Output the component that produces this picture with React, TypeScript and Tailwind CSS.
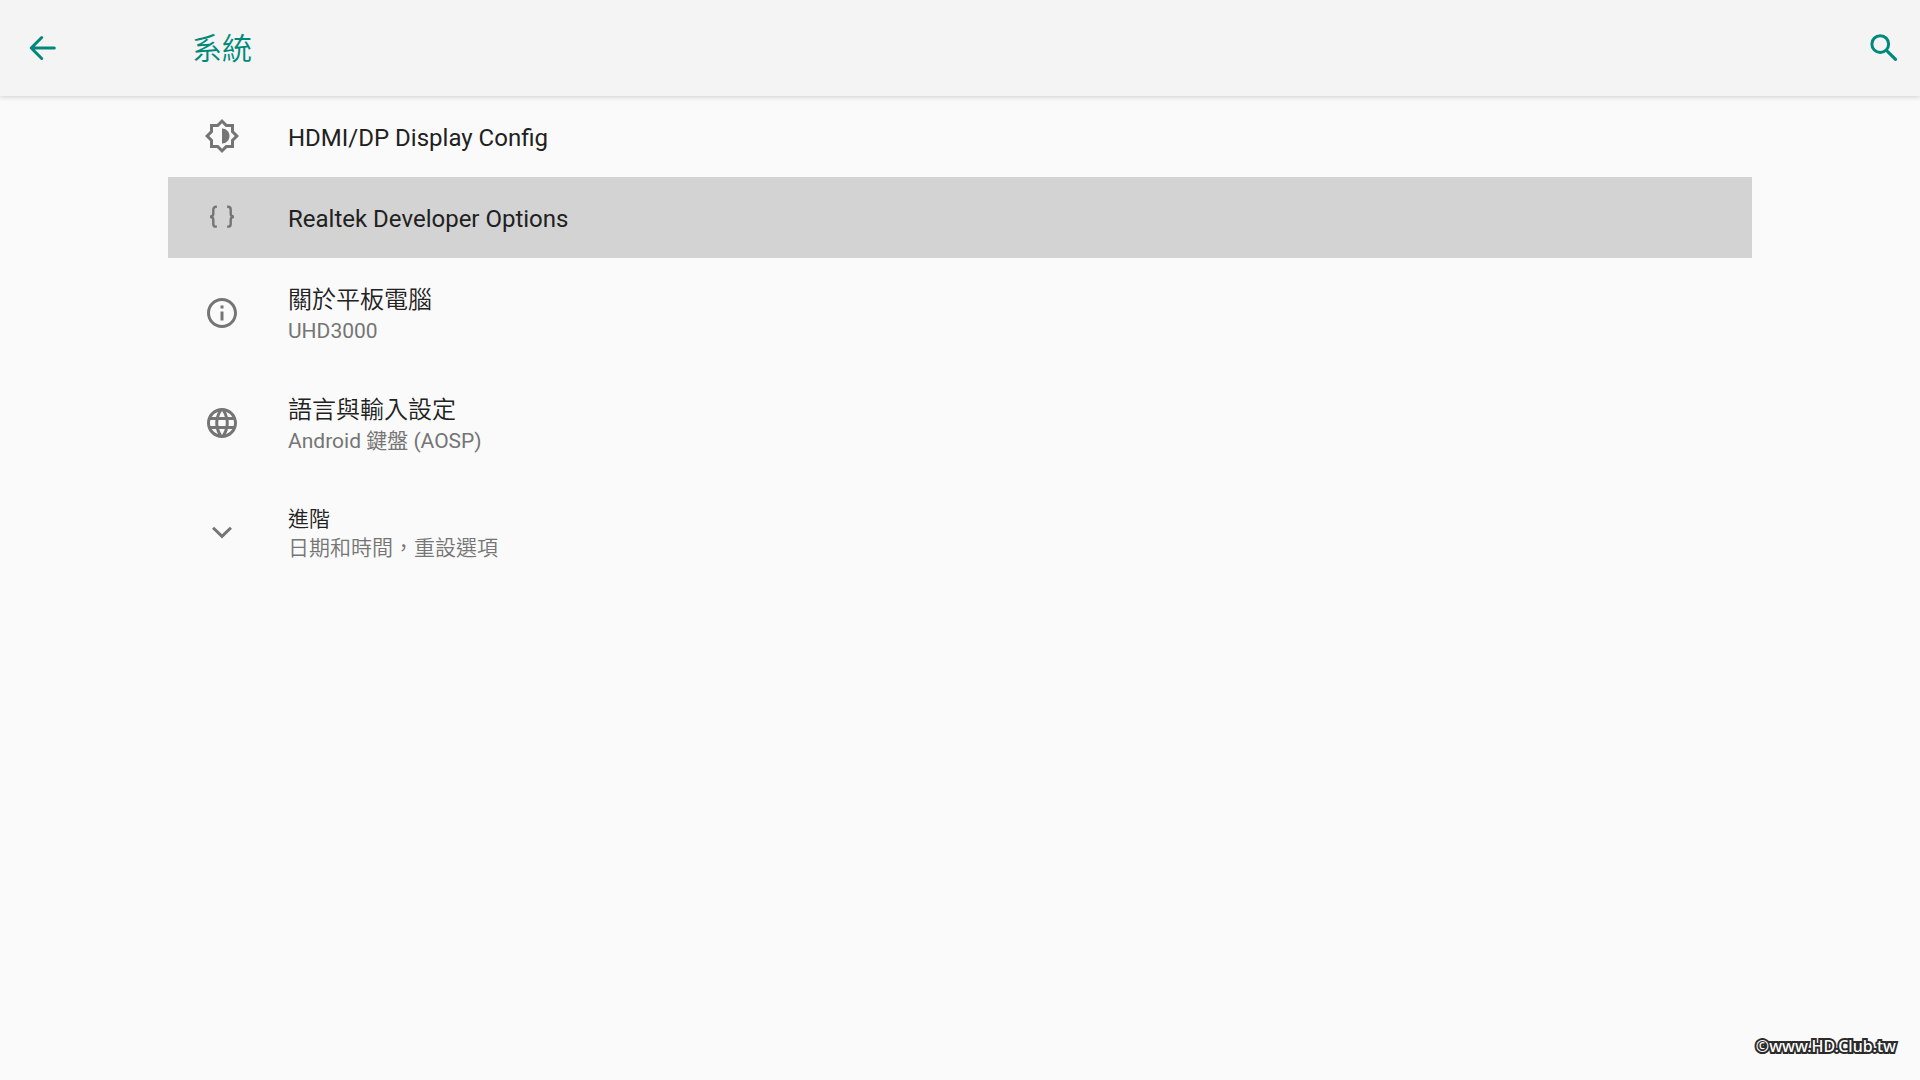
import type { ReactNode } from 'react';

interface SettingsItem {
  id: string;
  title: string;
  summary?: string;
  icon: ReactNode;
  selected?: boolean;
  compact?: boolean;
}

function ArrowBackIcon() {
  return (
    <svg viewBox="0 0 24 24" className="size-9" fill="none" stroke="currentColor" strokeWidth="2" strokeLinecap="round" aria-hidden="true">
      <path d="M20.2 12H5M11.8 5l-7 7 7 7" strokeLinejoin="round" />
    </svg>
  );
}

function SearchIcon() {
  return (
    <svg viewBox="0 0 24 24" className="size-9" fill="none" stroke="currentColor" aria-hidden="true">
      <circle cx="9.5" cy="9.4" r="5.6" strokeWidth="2" />
      <path d="M14.3 14.2l5.4 5.4" strokeWidth="2.1" strokeLinecap="round" />
    </svg>
  );
}

function DisplayIcon() {
  return (
    <svg viewBox="0 0 24 24" className="size-9" fill="currentColor" aria-hidden="true">
      <path
        fillRule="evenodd"
        d="M20 8.69V4h-4.69L12 .69 8.69 4H4v4.69L.69 12 4 15.31V20h4.69L12 23.31 15.31 20H20v-4.69L23.31 12 20 8.69zm-2 5.79V18h-3.52L12 20.48 9.52 18H6v-3.52L3.52 12 6 9.52V6h3.52L12 3.52 14.48 6H18v3.52L20.48 12 18 14.48z"
      />
      <path d="M12 7v10c2.76 0 5-2.24 5-5s-2.24-5-5-5z" />
    </svg>
  );
}

function BracesIcon() {
  return (
    <svg viewBox="0 0 24 24" className="size-9" fill="none" stroke="currentColor" strokeWidth="1.6" aria-hidden="true">
      <path d="M8.6 5.2H8c-1.1 0-1.8.7-1.8 1.8v2.7c0 1.3-.6 2.1-2.2 2.1 1.6 0 2.2.8 2.2 2.1v2.7c0 1.1.7 1.8 1.8 1.8h.6" />
      <path d="M15.4 5.2h.6c1.1 0 1.8.7 1.8 1.8v2.7c0 1.3.6 2.1 2.2 2.1-1.6 0-2.2.8-2.2 2.1v2.7c0 1.1-.7 1.8-1.8 1.8h-.6" />
    </svg>
  );
}

function InfoIcon() {
  return (
    <svg viewBox="0 0 24 24" className="size-9" fill="currentColor" aria-hidden="true">
      <path d="M11 7h2v2h-2zm0 4h2v6h-2zm1-9C6.48 2 2 6.48 2 12s4.48 10 10 10 10-4.48 10-10S17.52 2 12 2zm0 18c-4.41 0-8-3.59-8-8s3.59-8 8-8 8 3.59 8 8-3.59 8-8 8z" />
    </svg>
  );
}

function LanguageIcon() {
  return (
    <svg viewBox="0 0 24 24" className="size-9" fill="currentColor" aria-hidden="true">
      <path d="M11.99 2C6.47 2 2 6.48 2 12s4.47 10 9.99 10C17.52 22 22 17.52 22 12S17.52 2 11.99 2zm6.93 6h-2.95a15.65 15.65 0 0 0-1.38-3.56A8.03 8.03 0 0 1 18.92 8zM12 4.04c.83 1.2 1.48 2.53 1.91 3.96h-3.82c.43-1.43 1.08-2.76 1.91-3.96zM4.26 14C4.1 13.36 4 12.69 4 12s.1-1.36.26-2h3.38c-.08.66-.14 1.32-.14 2s.06 1.34.14 2H4.26zm.82 2h2.95c.32 1.25.78 2.45 1.38 3.56A7.99 7.99 0 0 1 5.08 16zm2.95-8H5.08a7.99 7.99 0 0 1 4.33-3.56A15.65 15.65 0 0 0 8.03 8zM12 19.96c-.83-1.2-1.48-2.53-1.91-3.96h3.82c-.43 1.43-1.08 2.76-1.91 3.96zM14.34 14H9.66c-.09-.66-.16-1.32-.16-2s.07-1.35.16-2h4.68c.09.65.16 1.32.16 2s-.07 1.34-.16 2zm.25 5.56c.6-1.11 1.06-2.31 1.38-3.56h2.95a8.03 8.03 0 0 1-4.33 3.56zM16.36 14c.08-.66.14-1.32.14-2s-.06-1.34-.14-2h3.38c.16.64.26 1.31.26 2s-.1 1.36-.26 2h-3.38z" />
    </svg>
  );
}

function ExpandIcon() {
  return (
    <svg viewBox="0 0 24 24" className="size-9" fill="currentColor" aria-hidden="true">
      <path d="M17.25 7.8L12 12.9 6.75 7.8 5.35 9.2 12 15.7l6.65-6.5z" />
    </svg>
  );
}

const items: SettingsItem[] = [
  { id: 'display', title: 'HDMI/DP Display Config', icon: <DisplayIcon /> },
  { id: 'developer', title: 'Realtek Developer Options', icon: <BracesIcon />, selected: true },
  { id: 'about', title: '關於平板電腦', summary: 'UHD3000', icon: <InfoIcon /> },
  { id: 'language', title: '語言與輸入設定', summary: 'Android 鍵盤 (AOSP)', icon: <LanguageIcon /> },
  { id: 'advanced', title: '進階', summary: '日期和時間，重設選項', icon: <ExpandIcon />, compact: true },
];

function SettingsRow({ item }: { item: SettingsItem }) {
  return (
    <button
      type="button"
      className={`flex w-full items-center px-9 text-left ${item.summary ? 'min-h-[110px]' : 'min-h-[81px]'} ${
        item.selected ? 'bg-[#d3d3d3]' : ''
      } ${item.compact ? 'font-[350]' : 'font-normal'}`}
    >
      <span className={`w-21 shrink-0 text-[#757575] ${item.summary ? '' : 'pb-px'}`}>{item.icon}</span>
      <span className="flex flex-col pt-0.5">
        <span
          className={`text-[#212121] ${item.compact ? 'text-[21px] leading-[29px]' : 'text-2xl leading-[34px]'} ${
            item.summary ? 'font-[350]' : ''
          }`}
        >
          {item.title}
        </span>
        {item.summary && <span className="text-[21px] leading-[29px] text-[#757575]">{item.summary}</span>}
      </span>
    </button>
  );
}

export default function App() {
  return (
    <div
      lang="zh-Hant"
      className="flex min-h-screen flex-col bg-[#fafafa] font-['Roboto','Noto_Sans_CJK_TC',sans-serif]"
    >
      <header className="flex h-24 items-center bg-[#f4f4f4] pr-[18px] pl-6 text-[#00897b] shadow-[0_1px_5px_rgba(0,0,0,0.18)]">
        <button type="button" aria-label="返回" className="w-42 shrink-0">
          <ArrowBackIcon />
        </button>
        <h1 className="flex-1 pt-0.5 text-[30px] leading-10 font-[350]">系統</h1>
        <button type="button" aria-label="搜尋">
          <SearchIcon />
        </button>
      </header>

      <main className="mx-42 flex-1">
        <ul>
          {items.map(item => (
            <li key={item.id}>
              <SettingsRow item={item} />
            </li>
          ))}
        </ul>
      </main>

      <footer className="flex justify-end px-6 pb-[22px]">
        <span className="font-['Noto_Sans','Open_Sans',sans-serif] text-base leading-6 font-medium text-white [-webkit-text-stroke:4px_#2b2b2b] [paint-order:stroke_fill]">
          ©www.HD.Club.tw
        </span>
      </footer>
    </div>
  );
}
